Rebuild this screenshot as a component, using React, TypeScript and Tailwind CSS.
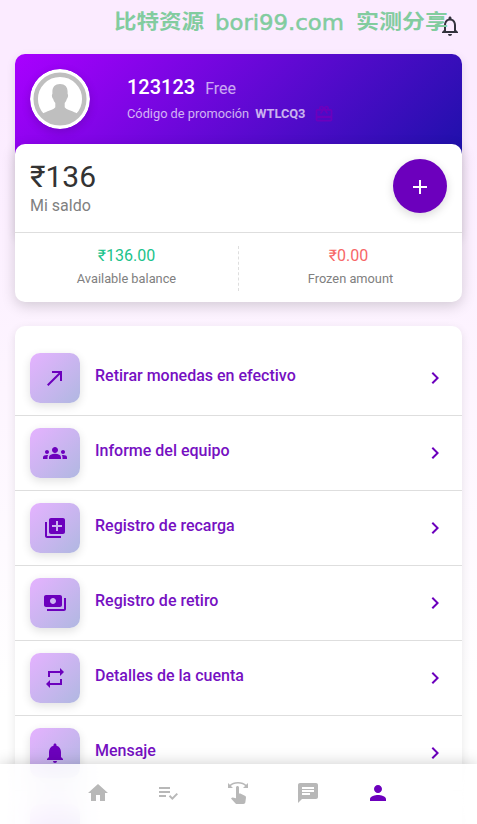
import React from "react";
import {
  MdAdd,
  MdCallMade,
  MdChat,
  MdChevronRight,
  MdGroups,
  MdHome,
  MdLibraryAdd,
  MdNotifications,
  MdNotificationsNone,
  MdOutlineCardGiftcard,
  MdPayments,
  MdPerson,
  MdPlaylistAddCheck,
  MdRepeat,
  MdSwipe,
} from "react-icons/md";
import type { IconType } from "react-icons";

const menu: { label: string; Icon: IconType }[] = [
  { label: "Retirar monedas en efectivo", Icon: MdCallMade },
  { label: "Informe del equipo", Icon: MdGroups },
  { label: "Registro de recarga", Icon: MdLibraryAdd },
  { label: "Registro de retiro", Icon: MdPayments },
  { label: "Detalles de la cuenta", Icon: MdRepeat },
  { label: "Mensaje", Icon: MdNotifications },
];

const tabs: { name: string; Icon: IconType; active?: boolean }[] = [
  { name: "home", Icon: MdHome },
  { name: "tasks", Icon: MdPlaylistAddCheck },
  { name: "swipe", Icon: MdSwipe },
  { name: "chat", Icon: MdChat },
  { name: "profile", Icon: MdPerson, active: true },
];

function TopBar() {
  return (
    <header className="relative flex h-[54px] items-start justify-end pr-[15px] pt-[14px]">
      <MdNotificationsNone className="size-6 text-[#33333d]" />
      <svg className="absolute left-[110px] top-0 h-10 w-[345px]" viewBox="0 0 345 40">
        <g fill="#82cc9f" fontWeight="700" fontFamily="'Noto Sans CJK SC', sans-serif" fontSize="20">
          <text x="4" y="29" textLength="90" lengthAdjust="spacingAndGlyphs">比特资源</text>
          <text
            x="105"
            y="30"
            textLength="129"
            lengthAdjust="spacingAndGlyphs"
            fontWeight="400"
            fontFamily="'DejaVu Sans', sans-serif"
            fontSize="21"
            stroke="#82cc9f"
            strokeWidth="0.500"
          >
            bori99.com
          </text>
          <text x="246" y="29" textLength="92" lengthAdjust="spacingAndGlyphs">实测分享</text>
        </g>
      </svg>
    </header>
  );
}

function Avatar() {
  return (
    <svg className="size-[60px] rounded-full shadow-[0_3px_10px_rgba(0,0,0,0.15)]" viewBox="0 0 60 60">
      <circle cx="30" cy="30" r="30" fill="#fff" />
      <circle cx="30" cy="30" r="24.300" fill="#fff" stroke="#bfbfbf" strokeWidth="4.500" />
      <path
        fill="#bfbfbf"
        d="M30 15c5 0 7.600 3 7.600 7.500v2.500c1 .8.300 4.200-.7 4.700-.5 2-1.200 3-2.200 4.300v4.200c1 2.300 9.500 4 13.300 6.800A25 25 0 0 1 30 56a25 25 0 0 1-18-11c3.800-2.800 12.300-4.500 13.300-6.800V34c-1-1.300-1.700-2.300-2.200-4.300-1-.5-1.700-3.900-.7-4.700v-2.500C22.400 18 25 15 30 15z"
      />
    </svg>
  );
}

function ProfileCard() {
  return (
    <section className="mx-[15px] rounded-[10px]">
      <div className="-mb-[96px] flex h-[186px] items-start rounded-[10px] bg-[linear-gradient(135deg,#a900ff,#1512a5_92%)] px-[15px] pt-[15px] shadow-[0_3px_10px_rgba(0,0,0,0.1)]">
        <Avatar />
        <div className="ml-[37px] pt-[6px]">
          <div className="flex items-baseline">
            <span className="text-[20px] font-medium leading-[24px] text-white">123123</span>
            <span className="ml-[10px] text-[16px] leading-[24px] text-white/65">Free</span>
          </div>
          <div className="mt-[3px] flex h-[20px] items-center text-[12.8px] text-white/70">
            <span>Código de promoción</span>
            <span className="ml-[6px] font-bold">WTLCQ3</span>
            <MdOutlineCardGiftcard className="ml-[9px] size-5 text-[#6c00bd]" />
          </div>
        </div>
      </div>
      <div className="relative h-[158px] rounded-[10px] bg-white shadow-[0_4px_14px_rgba(0,0,0,0.17)]">
        <div className="flex h-[89px] items-start justify-between border-b border-[#dedede] px-[15px] pt-[15px]">
          <div>
            <p className="text-[30px] leading-[36px] text-[#333]">₹136</p>
            <p className="text-[16px] leading-[22px] text-[#808080]">Mi saldo</p>
          </div>
          <button className="flex size-[54px] items-center justify-center rounded-full bg-[#6c00bd] pt-[2px] text-white shadow-[0_3px_10px_rgba(0,0,0,0.15)]">
            <MdAdd className="size-6" />
          </button>
        </div>
        <div className="flex pt-[13px] text-center">
          <div className="h-[45px] w-[224px] border-r border-dashed border-[#dedede]">
            <p className="text-[16px] leading-[20px] text-[#1ac38b]">₹136.00</p>
            <p className="mt-[4px] text-[12.8px] leading-[18px] text-[#808080]">Available balance</p>
          </div>
          <div className="h-[45px] flex-1">
            <p className="pr-[4px] text-[16px] leading-[20px] text-[#f76767]">₹0.00</p>
            <p className="mt-[4px] text-[12.8px] leading-[18px] text-[#808080]">Frozen amount</p>
          </div>
        </div>
      </div>
    </section>
  );
}

function MenuTile({ children }: { children?: React.ReactNode }) {
  return (
    <span className="flex size-[50px] items-center justify-center rounded-[10px] bg-[linear-gradient(135deg,#e5b2ff,#b0b8e1)] shadow-[0_3px_10px_rgba(0,0,0,0.12)]">
      {children}
    </span>
  );
}

function Menu() {
  return (
    <ul className="mx-[15px] mt-[24px] rounded-[10px] bg-white pt-[15px] shadow-[0_3px_10px_rgba(0,0,0,0.1)]">
      {menu.map(({ label, Icon }) => (
        <li key={label} className="flex h-[75px] items-center border-b border-[#dedede] px-[15px] text-[#6c00bd]">
          <MenuTile>
            <Icon className="size-6" />
          </MenuTile>
          <span className="ml-[15px] flex-1 pb-[4px] text-[16px] font-medium leading-5 text-[#7610c2]">{label}</span>
          <MdChevronRight className="size-6" />
        </li>
      ))}
      <li className="flex h-[75px] items-center px-[15px]">
        <MenuTile />
      </li>
    </ul>
  );
}

function TabBar() {
  return (
    <nav className="fixed inset-x-0 bottom-0 flex h-[60px] items-center justify-center bg-white/80 pb-[2px] pr-px shadow-[0_0_15px_rgba(0,0,0,0.2)] backdrop-blur-[15px]">
      {tabs.map(({ name, Icon, active }) => (
        <button key={name} aria-label={name} className={`flex w-[70px] justify-center ${active ? "text-[#6c00bd]" : "text-[#b8b8b8]"}`}>
          <Icon className="size-6" />
        </button>
      ))}
    </nav>
  );
}

export default function App() {
  return (
    <main className="h-[824px] overflow-hidden bg-[linear-gradient(180deg,#fbebff,#fbebff_10%,#ffffff_85%)] font-[Roboto,sans-serif]">
      <TopBar />
      <ProfileCard />
      <Menu />
      <TabBar />
    </main>
  );
}
